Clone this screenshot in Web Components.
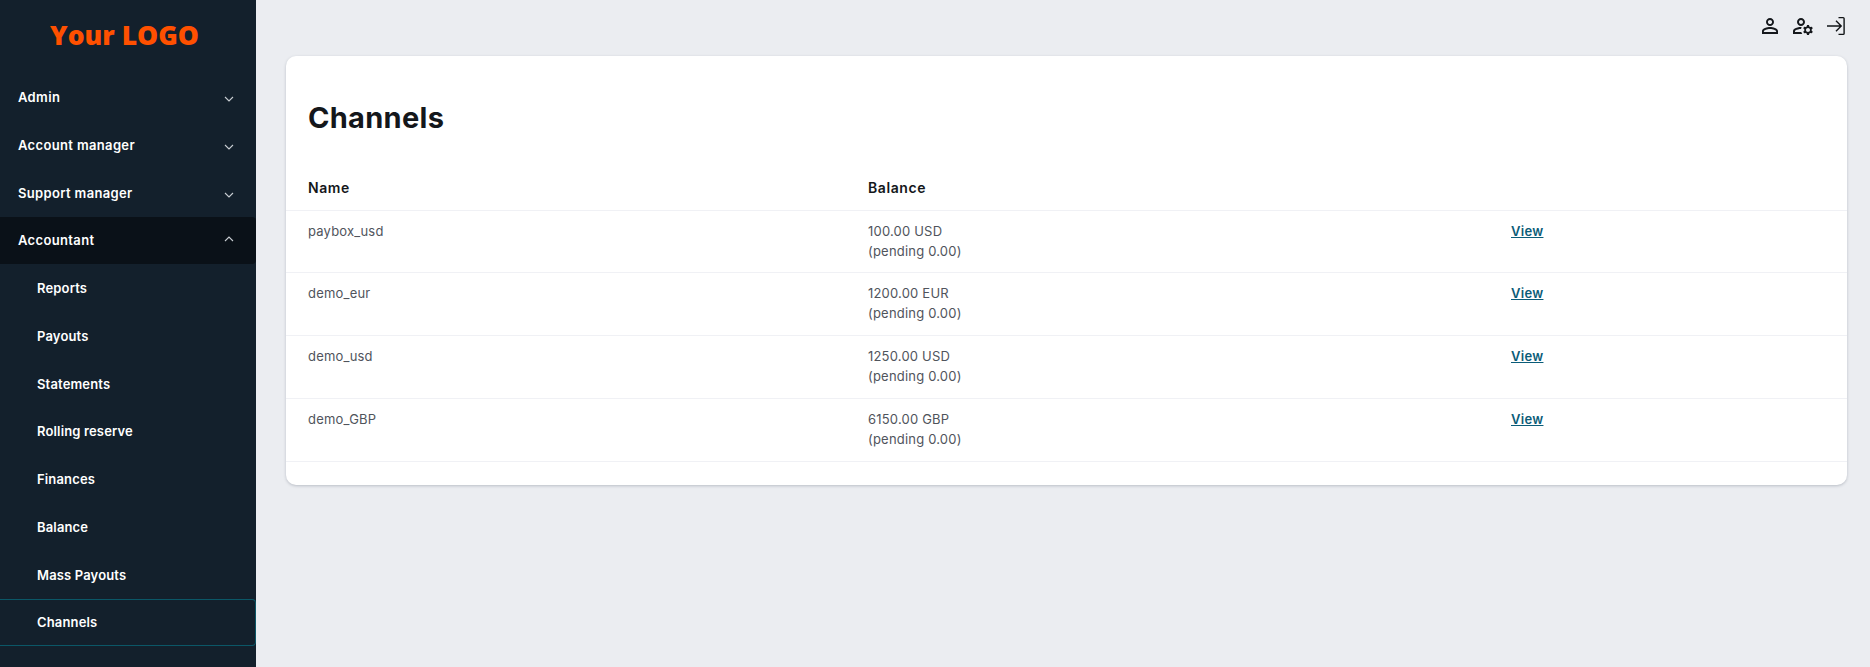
<!DOCTYPE html>
<html lang="en">
<head>
<meta charset="utf-8">
<title>Channels</title>
<style>
  html, body { margin: 0; padding: 0; height: 100%; }
  body { background: #ebedf1; font-family: Inter, "Liberation Sans", sans-serif; overflow: hidden; }
</style>
</head>
<body>
<app-shell>
  <app-sidebar slot="sidebar">
    <nav-item label="Admin" caret="down"></nav-item>
    <nav-item label="Account manager" caret="down"></nav-item>
    <nav-item label="Support manager" caret="down"></nav-item>
    <nav-item label="Accountant" caret="up" open></nav-item>
    <nav-item label="Reports" sub></nav-item>
    <nav-item label="Payouts" sub></nav-item>
    <nav-item label="Statements" sub></nav-item>
    <nav-item label="Rolling reserve" sub></nav-item>
    <nav-item label="Finances" sub></nav-item>
    <nav-item label="Balance" sub></nav-item>
    <nav-item label="Mass Payouts" sub></nav-item>
    <nav-item label="Channels" sub active></nav-item>
  </app-sidebar>
  <top-bar slot="topbar"></top-bar>
  <channel-card title-text="Channels">
    <channel-row name="paybox_usd" amount="100.00 USD" pending="(pending 0.00)"></channel-row>
    <channel-row name="demo_eur" amount="1200.00 EUR" pending="(pending 0.00)"></channel-row>
    <channel-row name="demo_usd" amount="1250.00 USD" pending="(pending 0.00)"></channel-row>
    <channel-row name="demo_GBP" amount="6150.00 GBP" pending="(pending 0.00)"></channel-row>
  </channel-card>
</app-shell>

<script>
// Page frame: sidebar on the left, topbar and content on the right
class AppShell extends HTMLElement {
  constructor() {
    super();
    this.attachShadow({ mode: 'open' }).innerHTML = `<style>
      :host { display: flex; height: 667px; width: 1870px; }
      .main { flex: 1; min-width: 0; display: flex; flex-direction: column; padding: 0 23px 0 30px; }
    </style>
    <slot name="sidebar"></slot>
    <div class="main">
      <slot name="topbar"></slot>
      <slot></slot>
    </div>`;
  }
}

class AppSidebar extends HTMLElement {
  constructor() {
    super();
    this.attachShadow({ mode: 'open' }).innerHTML = `<style>
      :host { display: flex; flex-direction: column; width: 256px; flex: none; background: #13202c; }
      .logo {
        height: 73.25px;
        display: flex;
        justify-content: center;
        align-items: center;
        box-sizing: border-box;
        padding: 0 7px 3px 0;
        font-family: "Open Sans", sans-serif;
        font-weight: 800;
        font-size: 26.5px;
        color: #ff5000;
      }
    </style>
    <div class="logo">Your LOGO</div>
    <slot></slot>`;
  }
}

class NavItem extends HTMLElement {
  constructor() {
    super();
    const caret = this.getAttribute('caret');
    const chevron = caret
      ? `<svg class="${caret}" width="10" height="6" viewBox="0 0 10 6" fill="none" stroke="#c9ced3" stroke-width="1.1">
           <path d="${caret === 'up' ? 'M1 5 5 1l4 4' : 'M1 1l4 4 4-4'}"/>
         </svg>`
      : '';
    this.attachShadow({ mode: 'open' }).innerHTML = `<style>
      :host { display: block; }
      .item {
        height: 47.75px;
        box-sizing: border-box;
        display: flex;
        align-items: center;
        justify-content: space-between;
        padding: 0 22px 0 18px;
        font-size: 13px;
        font-weight: 600;
        letter-spacing: .35px;
        color: #fff;
        border-radius: 0 4px 4px 0;
      }
      svg.down { margin-top: 4px; }
      svg.up { margin-top: -3px; }
      :host([sub]) .item { padding-left: 37px; letter-spacing: .15px; }
      :host([open]) .item { background: #0a1118; }
      :host([active]) .item { border: 1px solid #0b5767; border-left: 0; }
    </style>
    <div class="item"><span>${this.getAttribute('label')}</span>${chevron}</div>`;
  }
}

class TopBar extends HTMLElement {
  constructor() {
    super();
    this.attachShadow({ mode: 'open' }).innerHTML = `<style>
      :host { display: flex; justify-content: flex-end; align-items: center; gap: 9px; height: 56px; padding-bottom: 4px; margin-right: -1px; box-sizing: border-box; }
      svg { display: block; }
    </style>
    <svg width="24" height="24" viewBox="0 0 24 24" fill="#15181c">
      <path d="M12 5.9c1.16 0 2.1.94 2.1 2.1s-.94 2.1-2.1 2.1S9.9 9.16 9.9 8s.94-2.1 2.1-2.1m0 9c2.97 0 6.1 1.46 6.1 2.1v1.1H5.9V17c0-.64 3.13-2.1 6.1-2.1M12 4C9.79 4 8 5.79 8 8s1.79 4 4 4 4-1.79 4-4-1.79-4-4-4zm0 9c-2.67 0-8 1.34-8 4v3h16v-3c0-2.66-5.33-4-8-4z"/>
    </svg>
    <svg width="24" height="24" viewBox="0 0 24 24" fill="#15181c">
      <path d="M4 18v-.65c0-.34.16-.66.41-.81C6.1 15.53 8.03 15 10 15c.03 0 .05 0 .08.01.1-.7.3-1.37.59-1.98-.22-.02-.44-.03-.67-.03-2.42 0-4.68.67-6.61 1.82-.88.52-1.39 1.5-1.39 2.53V20h9.26c-.42-.6-.75-1.28-.97-2H4zM10 12c2.21 0 4-1.79 4-4s-1.79-4-4-4-4 1.79-4 4 1.79 4 4 4zm0-6c1.1 0 2 .9 2 2s-.9 2-2 2-2-.9-2-2 .9-2 2-2zM20.75 16c0-.22-.03-.42-.06-.63l1.14-1.01-1-1.73-1.45.49c-.32-.27-.68-.48-1.08-.63L18 11h-2l-.3 1.49c-.4.15-.76.36-1.08.63l-1.45-.49-1 1.73 1.14 1.01c-.03.21-.06.41-.06.63s.03.42.06.63l-1.14 1.01 1 1.73 1.45-.49c.32.27.68.48 1.08.63L16 21h2l.3-1.49c.4-.15.76-.36 1.08-.63l1.45.49 1-1.73-1.14-1.01c.03-.21.06-.41.06-.63zM17 18c-1.1 0-2-.9-2-2s.9-2 2-2 2 .9 2 2-.9 2-2 2z"/>
    </svg>
    <svg width="24" height="24" viewBox="0 0 24 24" fill="none" stroke="#111417" stroke-width="1.4">
      <path d="M3 12h14M12 6.8l5.2 5.2-5.2 5.2"/>
      <path d="M14.5 3.6h4.6c.6 0 1 .4 1 1v14.8c0 .6-.4 1-1 1h-4.6"/>
    </svg>`;
  }
}

class ChannelCard extends HTMLElement {
  constructor() {
    super();
    this.attachShadow({ mode: 'open' }).innerHTML = `<style>
      :host {
        display: block;
        background: #fff;
        border-radius: 10px;
        box-shadow: 0 1px 3px rgba(40, 50, 70, .25);
        padding-bottom: 23px;
        --cols: 560px 643px 1fr;
      }
      h1 { margin: 0; padding: 44px 22px 0; height: 89px; box-sizing: border-box; font-size: 29px; line-height: 36px; font-weight: 700; letter-spacing: .3px; color: #14171b; }
      .head {
        display: grid;
        grid-template-columns: var(--cols);
        height: 65.5px;
        box-sizing: border-box;
        padding: 20px 22px 0;
        align-items: center;
        border-bottom: 1px solid #f0f1f5;
        font-size: 14px;
        font-weight: 600;
        letter-spacing: .6px;
        color: #14171b;
      }
    </style>
    <h1>${this.getAttribute('title-text')}</h1>
    <div class="head"><span>Name</span><span>Balance</span></div>
    <slot></slot>`;
  }
}

class ChannelRow extends HTMLElement {
  constructor() {
    super();
    this.attachShadow({ mode: 'open' }).innerHTML = `<style>
      :host {
        display: grid;
        grid-template-columns: var(--cols);
        height: 62.75px;
        box-sizing: border-box;
        padding: 10px 22px 0;
        border-bottom: 1px solid #f0f1f5;
        font-size: 13px;
        line-height: 20px;
        letter-spacing: .2px;
        color: #50545c;
      }
      a { color: #0b5c78; font-weight: 600; text-decoration: underline; letter-spacing: .3px; }
    </style>
    <div>${this.getAttribute('name')}</div>
    <div>${this.getAttribute('amount')}<br>${this.getAttribute('pending')}</div>
    <div><a href="#">View</a></div>`;
  }
}

customElements.define('app-shell', AppShell);
customElements.define('app-sidebar', AppSidebar);
customElements.define('nav-item', NavItem);
customElements.define('top-bar', TopBar);
customElements.define('channel-card', ChannelCard);
customElements.define('channel-row', ChannelRow);
</script>
</body>
</html>
